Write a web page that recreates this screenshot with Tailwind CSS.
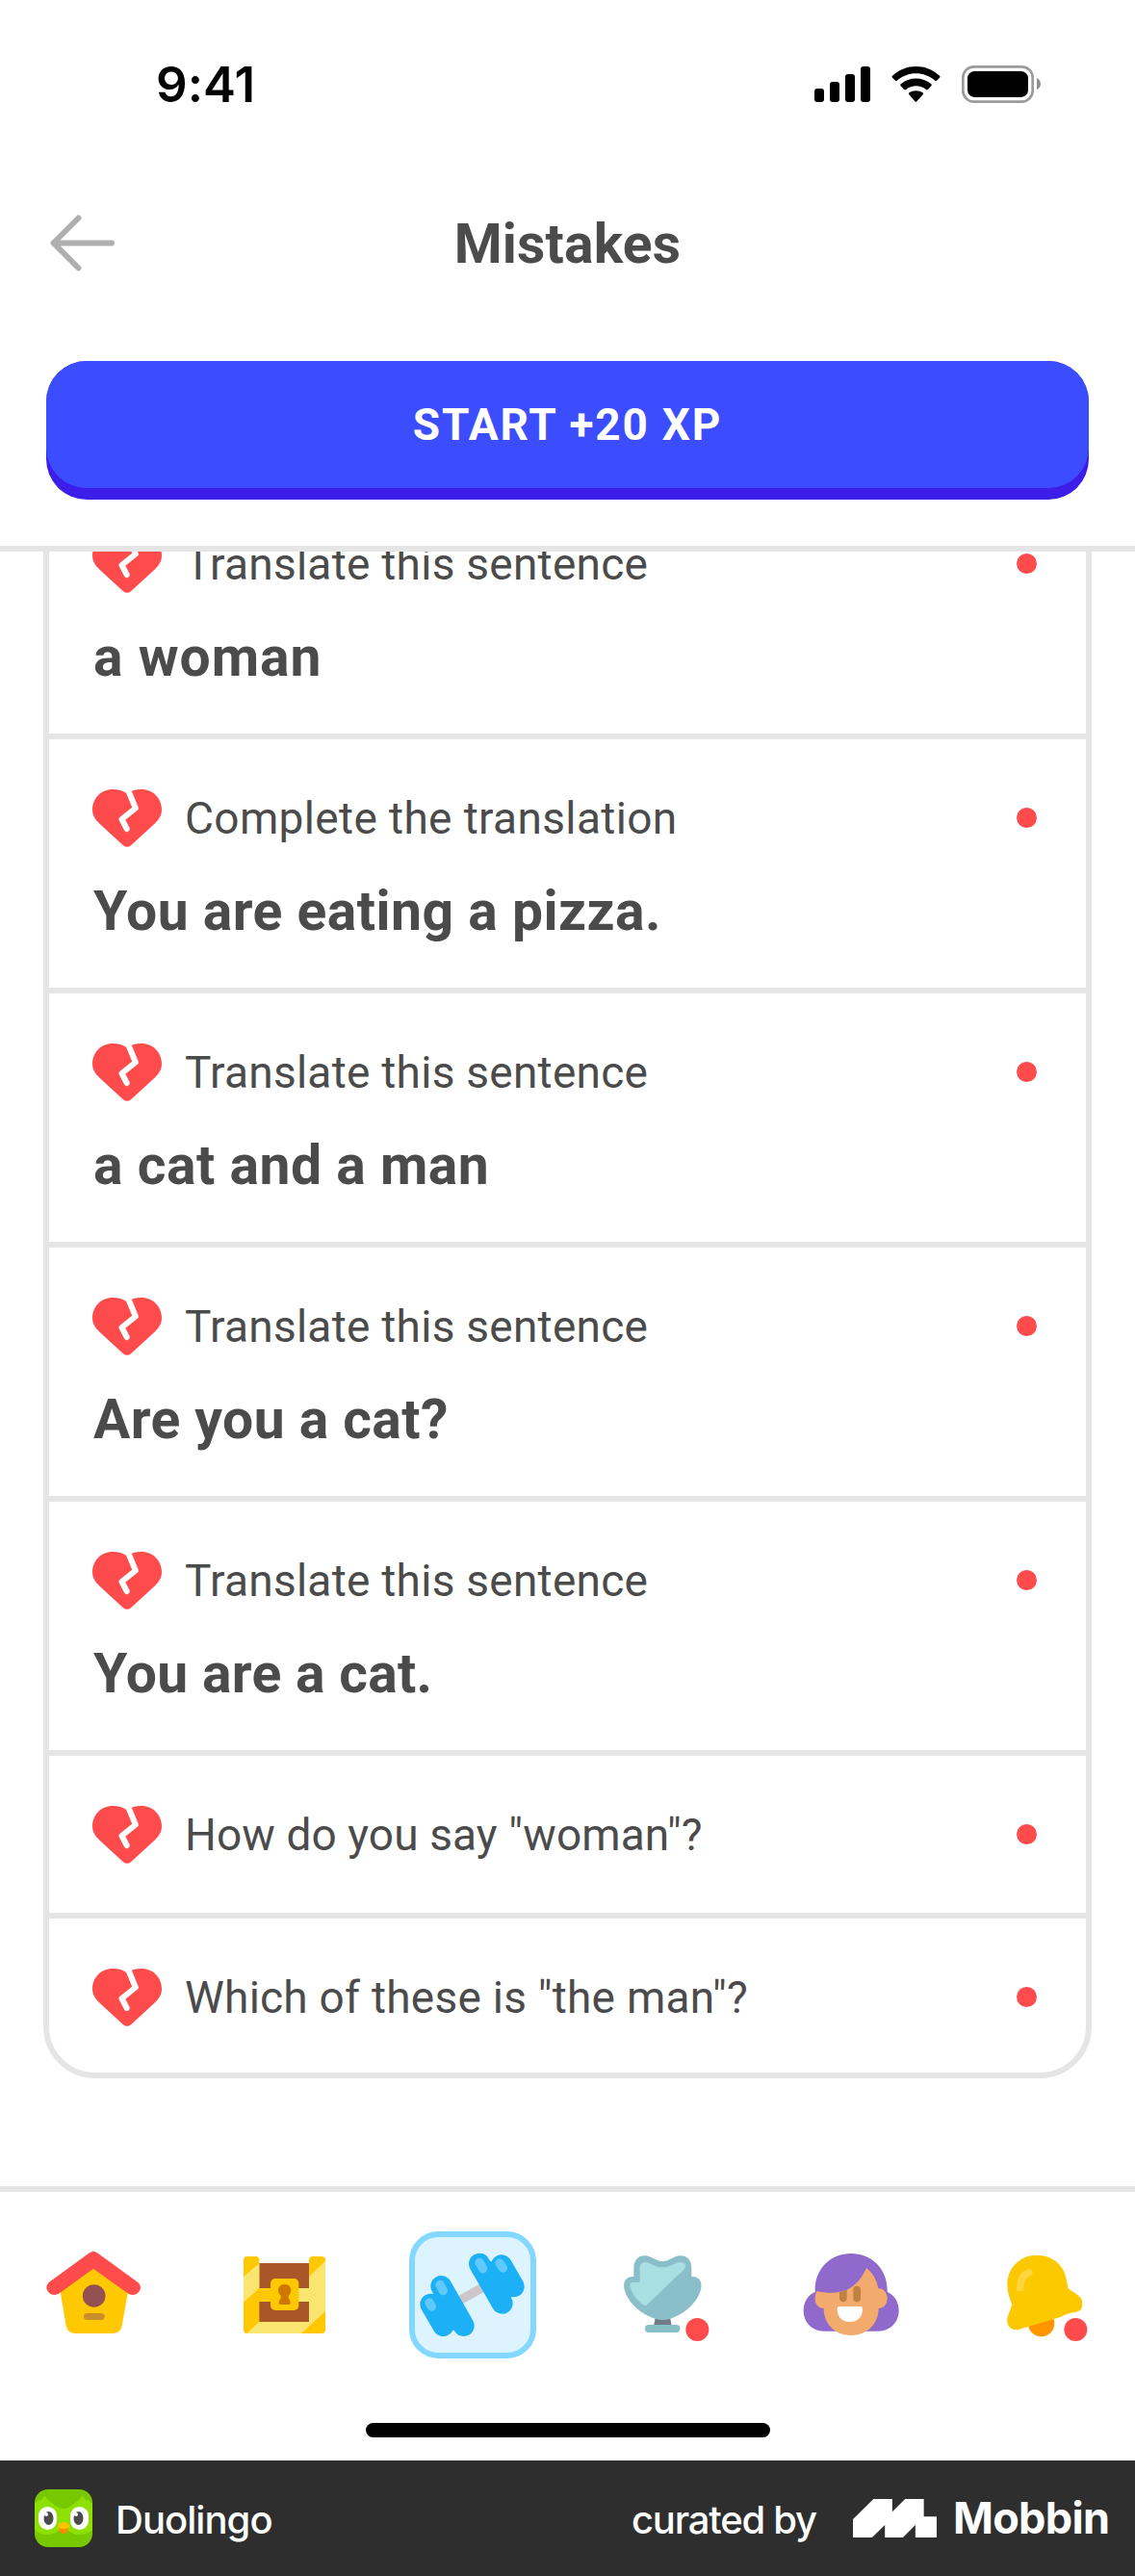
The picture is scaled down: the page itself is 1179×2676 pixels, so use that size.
<!DOCTYPE html>
<html lang="en">
<head>
<meta charset="utf-8">
<title>Mistakes</title>
<script src="https://cdn.jsdelivr.net/npm/@tailwindcss/browser@4"></script>
</head>
<body class="bg-white">
<svg class="hidden">
  <symbol id="heart" viewBox="0 0 72 60">
    <path fill="#ff4b4b" d="M36 4.500C32 1.300 27 0 21 0C9 0 0 9.500 0 21C0 27 3 31.500 7.500 35.700L32 58.200Q36 61.500 40 58.200L64.500 35.700C69 31.500 72 27 72 21C72 9.500 63 0 51 0C45 0 40 1.300 36 4.500Z"/>
    <path fill="none" stroke="#fff" stroke-width="6" stroke-linecap="round" stroke-linejoin="round" d="M34.500 -4L38 3L44.800 19.500L30.500 31L35.700 41"/>
  </symbol>
</svg>
<div class="flex h-[2676px] w-[1179px] flex-col overflow-hidden bg-white font-['Roboto',sans-serif] text-[#4b4b4b]">

  <!-- Status bar -->
  <div class="flex h-[175px] shrink-0 items-center justify-between pr-[98px] pl-[162px] text-black">
    <span class="font-['Inter',sans-serif] text-[51px] leading-none font-semibold tracking-[0.1px]">9:41</span>
    <div class="flex gap-[22px]">
      <svg class="h-[39px] w-[58px]" viewBox="78 54 174 117">
        <rect x="78" y="126" width="30" height="42" rx="9"/><rect x="126" y="105" width="30" height="63" rx="9"/><rect x="174" y="81" width="30" height="87" rx="9"/><rect x="222" y="57" width="30" height="111" rx="9"/>
      </svg>
      <svg class="h-[39px] w-[51px]" viewBox="318 54 153 117">
        <path d="M321 86C363 47 426 47 468 86Q471 89 468 92L459 101Q457 103 454 101C420 71 369 71 335 101Q332 103 330 101L321 92Q318 89 321 86Z"/>
        <path d="M347 112C374 89 415 89 442 112Q445 115 442 118L432 129Q429 131 426 129C408 114 381 114 363 129Q360 131 357 129L347 118Q344 115 347 112Z"/>
        <path d="M373 139C385 131 404 131 416 139Q419 142 416 145L397 166Q394 169 391 166L373 145Q370 142 373 139Z"/>
      </svg>
      <svg class="h-[39px] w-[82px]" viewBox="537 54 246 117">
        <rect x="541" y="58" width="217" height="109" rx="34" fill="none" stroke="#9b9b9b" stroke-width="8"/>
        <rect x="555" y="72" width="189" height="81" rx="22"/>
        <path fill="#8e8e8e" d="M771 93Q783 100 783 112Q783 123 771 130Z"/>
      </svg>
    </div>
  </div>

  <!-- Title bar -->
  <div class="flex h-[156px] shrink-0 items-center px-[52px] pb-px">
    <svg class="h-[60px] w-[67px]" viewBox="0 0 67 60" fill="none" stroke="#afafaf" stroke-width="6" stroke-linecap="round" stroke-linejoin="round"><path d="M64 29.500H4M29.500 3.500L3.500 29.500L29.500 55.500"/></svg>
    <h1 class="flex-1 pt-[3px] pr-[67px] text-center text-[57px] leading-[68px] font-bold tracking-[0.18px]">Mistakes</h1>
  </div>

  <!-- Primary action -->
  <div class="h-[242px] shrink-0 border-b-6 border-[#e5e5e5] px-12 pt-11">
    <button class="flex h-[144px] w-full rounded-[42px] bg-[#3c1ee8]">
      <span class="flex h-[132px] w-full items-center justify-center rounded-[42px] bg-[#3c4dff] text-[46px] font-bold tracking-[1.75px] text-white">START +20 XP</span>
    </button>
  </div>

  <!-- Mistake list -->
  <main class="h-[1698px] shrink-0 overflow-hidden px-[45px]">
    <ul class="-mt-[75px] rounded-[54px] border-6 border-[#e5e5e5]">
      <li class="h-[264px] border-b-6 border-[#e5e5e5] pt-[52px] pr-[51px] pl-[45px]">
        <div class="flex h-[60px] items-center"><svg class="h-[60px] w-[72px]"><use href="#heart"/></svg><span class="ml-6 flex-1 text-[46px] tracking-[0.26px]">Translate this sentence</span><i class="mb-0.5 size-[21px] rounded-full bg-[#ff4b4b]"></i></div>
        <p class="mt-[33px] text-[57px] leading-[68px] font-bold tracking-[0.99px] pl-px">a woman</p>
      </li>
      <li class="h-[264px] border-b-6 border-[#e5e5e5] pt-[52px] pr-[51px] pl-[45px]">
        <div class="flex h-[60px] items-center"><svg class="h-[60px] w-[72px]"><use href="#heart"/></svg><span class="ml-6 flex-1 text-[46px] tracking-[0.36px]">Complete the translation</span><i class="mb-0.5 size-[21px] rounded-full bg-[#ff4b4b]"></i></div>
        <p class="mt-[33px] text-[57px] leading-[68px] font-bold tracking-[0.49px] pl-px">You are eating a pizza.</p>
      </li>
      <li class="h-[264px] border-b-6 border-[#e5e5e5] pt-[52px] pr-[51px] pl-[45px]">
        <div class="flex h-[60px] items-center"><svg class="h-[60px] w-[72px]"><use href="#heart"/></svg><span class="ml-6 flex-1 text-[46px] tracking-[0.26px]">Translate this sentence</span><i class="mb-0.5 size-[21px] rounded-full bg-[#ff4b4b]"></i></div>
        <p class="mt-[33px] text-[57px] leading-[68px] font-bold tracking-[0.52px] pl-px">a cat and a man</p>
      </li>
      <li class="h-[264px] border-b-6 border-[#e5e5e5] pt-[52px] pr-[51px] pl-[45px]">
        <div class="flex h-[60px] items-center"><svg class="h-[60px] w-[72px]"><use href="#heart"/></svg><span class="ml-6 flex-1 text-[46px] tracking-[0.26px]">Translate this sentence</span><i class="mb-0.5 size-[21px] rounded-full bg-[#ff4b4b]"></i></div>
        <p class="mt-[33px] text-[57px] leading-[68px] font-bold tracking-[0.44px] pl-px">Are you a cat?</p>
      </li>
      <li class="h-[264px] border-b-6 border-[#e5e5e5] pt-[52px] pr-[51px] pl-[45px]">
        <div class="flex h-[60px] items-center"><svg class="h-[60px] w-[72px]"><use href="#heart"/></svg><span class="ml-6 flex-1 text-[46px] tracking-[0.26px]">Translate this sentence</span><i class="mb-0.5 size-[21px] rounded-full bg-[#ff4b4b]"></i></div>
        <p class="mt-[33px] text-[57px] leading-[68px] font-bold tracking-[0.3px] pl-px">You are a cat.</p>
      </li>
      <li class="h-[169px] border-b-6 border-[#e5e5e5] pt-[52px] pr-[51px] pl-[45px]">
        <div class="flex h-[60px] items-center"><svg class="h-[60px] w-[72px]"><use href="#heart"/></svg><span class="ml-6 flex-1 text-[46px] tracking-[0.1px]">How do you say "woman"?</span><i class="mb-0.5 size-[21px] rounded-full bg-[#ff4b4b]"></i></div>
      </li>
      <li class="h-[160px] pt-[52px] pr-[51px] pl-[45px]">
        <div class="flex h-[60px] items-center"><svg class="h-[60px] w-[72px]"><use href="#heart"/></svg><span class="ml-6 flex-1 text-[46px] tracking-[0.24px]">Which of these is "the man"?</span><i class="mb-0.5 size-[21px] rounded-full bg-[#ff4b4b]"></i></div>
      </li>
    </ul>
  </main>

  <!-- Tab bar -->
  <nav class="h-[285px] shrink-0 border-t-6 border-[#e5e5e5] pt-[41px]">
    <div class="grid grid-cols-6 justify-items-center">
      <!-- Birdhouse -->
      <svg class="size-[132px]" viewBox="97 174 396 396">
        <path fill="#ffc800" d="M291 275L189 362L207 468Q212 492 237 492H352Q376 492 381 468L400 362Z"/>
        <path fill="#ff4b4b" d="M280 241Q292 232 304 241L431 333Q443 345 437 358Q424 379 401 368L292 290L184 368Q160 379 148 358Q142 345 153 333Z"/>
        <circle cx="294" cy="375" r="35.500" fill="#945151"/>
        <rect x="262" y="429" width="65" height="21" rx="10.500" fill="#c98c2a"/>
      </svg>
      <!-- Chest -->
      <svg class="size-[132px]" viewBox="686 174 396 396">
        <rect x="795" y="273" width="180" height="184" fill="#a95628"/>
        <path fill="#ffc800" d="M770 252H795Q807 252 807 264V351H962V264Q962 252 974 252H1001Q1013 252 1013 264V480Q1013 492 1001 492H770Q758 492 758 480V264Q758 252 770 252ZM807 393V456H962V393Z" fill-rule="evenodd"/>
        <path fill="#fae570" d="M758 315L807 273V351L758 395ZM807 456H962V393H925V351H962V315L1013 266V423L938 492H768Z"/>
        <rect x="842" y="321" width="88" height="99" rx="15" fill="#ffc800"/>
        <circle cx="886" cy="358" r="20" fill="#cd7900"/>
        <path fill="#cd7900" d="M874 365H898V382L904 393V398Q904 402 899 402H873Q868 402 868 398V393L874 382Z"/>
      </svg>
      <!-- Dumbbell, active tab -->
      <svg class="size-[132px]" viewBox="46 24 396 396">
        <rect x="55" y="33" width="378" height="378" rx="82" fill="#ddf4ff" stroke="#84d8ff" stroke-width="18"/>
        <path stroke="#cdc6c8" stroke-width="28" d="M205 238L284 194"/>
        <g stroke="#1cb0f6" stroke-width="66" stroke-linecap="round">
          <path d="M113 251L152 318M146 195L216 318M265 125L336 248M334 130L372 196"/>
        </g>
        <path fill="#1cb0f6" d="M113 251L146 195L216 318L182 333L152 318ZM265 125L303 117L334 130L372 196L366 228L336 248Z"/>
        <g stroke="#60c9fb" stroke-width="28" stroke-linecap="round">
          <path d="M109 246L116 258M142 190L152 209M265 121L276 140M328 123L338 138"/>
        </g>
      </svg>
      <!-- Trophy -->
      <svg class="size-[132px]" viewBox="635 24 396 396">
        <path fill="#6f7d84" d="M812 290H857L862 318H806Z"/>
        <path fill="#8abfca" d="M744 165V138C744 106 768 92 797 104C815 112 822 117 834 117C846 117 853 112 871 104C900 92 924 106 924 138V165C944 162 958 178 954 200C948 236 912 278 856 297Q834 303 812 297C756 278 720 236 714 200C710 178 724 162 744 165Z"/>
        <path fill="#a9dfe2" d="M763 183V138C763 122 776 116 790 122C808 130 818 136 834 136C850 136 860 130 878 122C890 117 905 120 906 134L900 143L786 252Q779 258 772 252C750 234 737 215 732 196Q730 183 742 183Z"/>
        <rect x="779" y="315" width="109" height="24" rx="11" fill="#8abfca"/>
        <circle cx="942" cy="330" r="36" fill="#ff4b4b"/>
      </svg>
      <!-- Profile -->
      <svg class="size-[132px]" viewBox="-5 24 396 396">
        <path fill="#9069cd" d="M81 206C81 140 130 93 193 93C256 93 306 140 306 206V213C328 222 342 244 342 271C342 308 315 335 278 335H108C72 335 45 308 45 271C45 244 59 222 81 213Z"/>
        <path fill="#f2ab6c" d="M86 210Q200 226 241 137Q273 165 278 202C296 202 306 217 306 233C306 250 295 264 279 264C279 313 242 348 193 348C144 348 108 313 108 264C92 264 81 251 81 234Q81 220 86 210Z"/>
        <path fill="#c1823f" d="M157 214Q170 211 180 204V232A11.500 11.500 0 0 1 157 232Z"/>
        <rect x="200" y="194" width="23" height="50" rx="11.500" fill="#c1823f"/>
        <path fill="#9069cd" d="M86 210C155 226 212 207 241 137L190 110L100 150Z"/>
        <path fill="#fff" d="M157 258H222Q229 258 229 266C229 291 213 306 189 306C166 306 150 291 150 266Q150 258 157 258Z"/>
      </svg>
      <!-- Notifications -->
      <svg class="size-[132px]" viewBox="584 24 396 396">
        <circle cx="784" cy="311" r="41" fill="#ff9600"/>
        <path fill="#fcc800" d="M769 98C718 98 678 138 678 190C678 214 685 232 693 252L679 290C672 315 689 335 714 330L846 290Q872 276 890 276C908 274 915 260 911 240C908 226 888 218 868 202C863 180 862 165 854 148C839 115 806 98 769 98Z"/>
        <path fill="none" stroke="#ffd53d" stroke-width="22" d="M719 210C716 178 725 158 748 152"/>
        <circle cx="747" cy="152" r="10" fill="#ffd53d"/>
        <circle cx="891" cy="330" r="36" fill="#ff4b4b"/>
      </svg>
    </div>
    <div class="mx-auto mt-[67px] h-[15px] w-[420px] rounded-full bg-black"></div>
  </nav>

  <!-- Credit footer -->
  <footer class="flex h-[120px] shrink-0 items-center bg-[#2e2e2e] pr-[24px] pl-9 font-['Inter',sans-serif] text-[40px] font-medium text-white">
    <svg class="size-[60px]" viewBox="0 0 60 60">
      <rect width="60" height="60" rx="14" fill="#78c800"/>
      <path fill="#8ee000" d="M0 15L4 11L6 12L10 7L22 17Q30 22 38 17L50 7L54 12L56 11L60 15V42Q55 47 47 47Q38 47 33 41H27Q22 47 13 47Q5 47 0 42Z"/>
      <path fill="#78c800" d="M13 10Q24 20 30 20Q36 20 47 10L49 6H11Z"/>
      <rect x="4" y="18" width="19" height="24" rx="9.500" fill="#fff"/><rect x="37" y="18" width="19" height="24" rx="9.500" fill="#fff"/>
      <ellipse cx="14.500" cy="30" rx="5" ry="7" fill="#4b4b4b"/><ellipse cx="45.500" cy="30" rx="5" ry="7" fill="#4b4b4b"/>
      <circle cx="12" cy="26" r="2" fill="#fff"/><circle cx="43" cy="26" r="2" fill="#fff"/>
      <path fill="#ff8a00" d="M25 40H35Q34 46 30 46Q26 46 25 40Z"/>
      <path fill="#ffc200" d="M24 38Q26 34 30 34Q34 34 36 38Q36 41 30 41Q24 41 24 38Z"/>
    </svg>
    <span class="mt-[4px] ml-[24px] tracking-[-0.95px]">Duolingo</span>
    <span class="mt-[4px] ml-auto w-[230px] tracking-[-1.25px] whitespace-nowrap">curated by</span>
    <svg class="h-10 w-[87px]" viewBox="802 408 228 120" preserveAspectRatio="none"><path fill="#fff" d="M802 471L858 408H909V448L944 408H995V463H1030V528H972V489L938 528H889V489L854 528H802Z"/></svg>
    <span class="ml-[17px] w-[165px] text-[45px] font-bold tracking-[-0.7px]">Mobbin</span>
  </footer>
</div>
</body>
</html>
